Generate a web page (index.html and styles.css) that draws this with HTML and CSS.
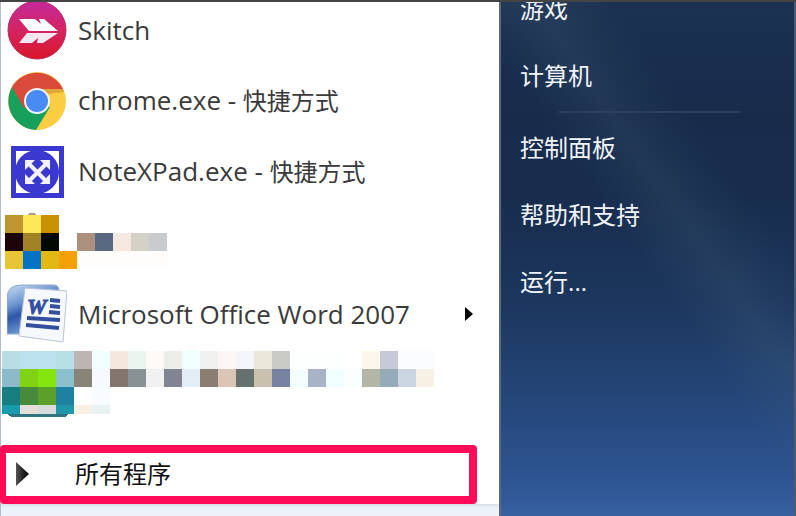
FILE: index.html
```
<!DOCTYPE html>
<html lang="zh-CN">
<head>
    <meta charset="UTF-8">
    <meta name="viewport" content="width=device-width, initial-scale=1.0">
    <title>开始菜单</title>
    <link rel="stylesheet" href="styles.css">
</head>
<body>
    <div class="start-menu">
        <div class="programs">
            <nav class="program-list">
                <a class="program" href="#">
                    <svg class="icon" viewBox="0 0 60 60" aria-hidden="true">
                        <defs>
                            <linearGradient id="skitchBg" x1="0" y1="0" x2="0" y2="1">
                                <stop offset="0" stop-color="#c42a9c"/>
                                <stop offset="0.5" stop-color="#d42463"/>
                                <stop offset="1" stop-color="#da1628"/>
                            </linearGradient>
                        </defs>
                        <circle cx="30" cy="30" r="29" fill="url(#skitchBg)" stroke="#b8285a" stroke-width="1"/>
                        <path d="M12 19h16l6 5-2-5h5l14 12H22z" fill="#fff"/>
                        <path d="M20 33h31L36 43h-6l1-5-6 5H12z" fill="#f6e8f0"/>
                    </svg>
                    <span>Skitch</span>
                </a>
                <a class="program" href="#">
                    <svg class="icon" viewBox="0 0 60 60" aria-hidden="true">
                        <circle cx="30" cy="30" r="29" fill="#fbcd43"/>
                        <path d="M30 30L5 16A29 29 0 0 0 29 59L43 36z" fill="#17a05c"/>
                        <path d="M30 30L17 37 5 16A29 29 0 0 1 56 18H30z" fill="#d94a3b"/>
                        <path d="M30 18h26l1 3-22 3z" fill="#e0a63a"/>
                        <circle cx="30" cy="30" r="13" fill="#f1f4f8"/>
                        <circle cx="30" cy="30" r="11" fill="#4a8af4"/>
                    </svg>
                    <span>chrome.exe - <span class="cjk">快捷方式</span></span>
                </a>
                <a class="program" href="#">
                    <svg class="icon" viewBox="0 0 60 60" aria-hidden="true">
                        <path d="M4 4h53v52H4z" fill="#3a38cf"/>
                        <path d="M9 9h43v42H9z" fill="#fff"/>
                        <circle cx="30" cy="30" r="22" fill="#3a38cf"/>
                        <path d="M22 22l17 17M39 22L22 39" stroke="#f2f2ff" stroke-width="4"/>
                        <path d="M18 18h10L18 28zM43 18v10L33 18zM18 42V32l10 10zM43 42H33l10-10z" fill="#f2f2ff"/>
                    </svg>
                    <span>NoteXPad.exe - <span class="cjk">快捷方式</span></span>
                </a>
                <a class="program masked" href="#" aria-label="已隐藏的程序">
                    <svg class="mosaic mosaic-small" viewBox="0 0 162 60" shape-rendering="crispEdges">
                        <path d="M22 2l3-2h4l3 2z" fill="#b39a86"/>
                        <path d="M0 2h18v18H0z" fill="#bd962f"/>
                        <path d="M18 2h18v18H18z" fill="#fde858"/>
                        <path d="M36 2h18v18H36z" fill="#c89100"/>
                        <path d="M0 20h18v18H0z" fill="#1d0407"/>
                        <path d="M18 20h18v18H18z" fill="#a18323"/>
                        <path d="M36 20h18v18H36z" fill="#020803"/>
                        <path d="M72 20h18v18H72z" fill="#ab917d"/>
                        <path d="M90 20h18v18H90z" fill="#5a6982"/>
                        <path d="M108 20h18v18h-18z" fill="#f5e8e1"/>
                        <path d="M126 20h18v18h-18z" fill="#d4d1c6"/>
                        <path d="M144 20h18v18h-18z" fill="#cacbcf"/>
                        <path d="M0 38h18v18H0z" fill="#e8c534"/>
                        <path d="M18 38h18v18H18z" fill="#0672c6"/>
                        <path d="M36 38h18v18H36z" fill="#e2b814"/>
                        <path d="M54 38h18v18H54z" fill="#f5a006"/>
                        <path d="M72 38h90v16H72z" fill="#fffdfc"/>
                    </svg>
                </a>
                <a class="program" href="#">
                    <svg class="icon" viewBox="0 0 60 60" aria-hidden="true">
                        <defs>
                            <linearGradient id="wordBg" x1="0" y1="0" x2="0.4" y2="1">
                                <stop offset="0" stop-color="#c9dcf2"/>
                                <stop offset="0.4" stop-color="#6b93cf"/>
                                <stop offset="0.6" stop-color="#2c56a8"/>
                                <stop offset="1" stop-color="#7ba5dc"/>
                            </linearGradient>
                        </defs>
                        <path d="M0 50V13Q1 1 14 1h33q5 0 5 6v43z" fill="url(#wordBg)" stroke="#8fa9cf"/>
                        <path d="M18 4l42 3-4 51-44-6z" fill="#f5f8fd" stroke="#b9c4d6"/>
                        <text class="word-mark" x="20" y="30">W</text>
                        <path d="M43 16l10 1M43 22l10 1M42 28l11 1M20 34l33 2M19 41l33 3" stroke="#334f9e" stroke-width="4"/>
                    </svg>
                    <span>Microsoft Office Word 2007</span>
                    <svg class="more" viewBox="0 0 8 14" aria-hidden="true"><path d="M0 0l8 7-8 7z" fill="#000"/></svg>
                </a>
                <a class="program masked" href="#" aria-label="已隐藏的程序">
                    <svg class="mosaic mosaic-large" viewBox="0 0 432 68" shape-rendering="crispEdges">
                        <path d="M5 63h62l-4 3H10z" fill="#2f7280"/>
                        <path d="M0 0h18v18H0z" fill="#b8dde5"/>
                        <path d="M18 0h36v18H18z" fill="#bbe1ee"/>
                        <path d="M54 0h18v18H54z" fill="#b7dfe6"/>
                        <path d="M72 0h18v18H72z" fill="#bdb4b3"/>
                        <path d="M90 0h18v18H90z" fill="#f2ffff"/>
                        <path d="M108 0h18v18h-18z" fill="#f5e6de"/>
                        <path d="M126 0h18v18h-18z" fill="#e8f4ed"/>
                        <path d="M144 0h18v18h-18z" fill="#fff9f6"/>
                        <path d="M162 0h18v18h-18z" fill="#ebeee9"/>
                        <path d="M180 0h18v18h-18z" fill="#efffff"/>
                        <path d="M198 0h18v18h-18z" fill="#eef1ee"/>
                        <path d="M216 0h18v18h-18z" fill="#fcf7f6"/>
                        <path d="M234 0h18v18h-18z" fill="#f4f5f9"/>
                        <path d="M252 0h18v18h-18z" fill="#e9e6da"/>
                        <path d="M270 0h18v18h-18z" fill="#cacbc6"/>
                        <path d="M288 0h54v18h-54z" fill="#fdfffe"/>
                        <path d="M360 0h18v18h-18z" fill="#fbf8e9"/>
                        <path d="M378 0h18v18h-18z" fill="#c7cad6"/>
                        <path d="M396 0h36v18h-36z" fill="#fbfcff"/>
                        <path d="M0 18h18v18H0z" fill="#8dbac9"/>
                        <path d="M18 18h18v18H18z" fill="#7fd313"/>
                        <path d="M36 18h18v18H36z" fill="#86e50e"/>
                        <path d="M54 18h18v18H54z" fill="#8bc0cd"/>
                        <path d="M72 18h18v18H72z" fill="#87857a"/>
                        <path d="M90 18h18v18H90z" fill="#f6faff"/>
                        <path d="M108 18h18v18h-18z" fill="#83766e"/>
                        <path d="M126 18h18v18h-18z" fill="#889193"/>
                        <path d="M144 18h18v18h-18z" fill="#f1f1f1"/>
                        <path d="M162 18h18v18h-18z" fill="#828493"/>
                        <path d="M180 18h18v18h-18z" fill="#e2edf6"/>
                        <path d="M198 18h18v18h-18z" fill="#8a7e72"/>
                        <path d="M216 18h18v18h-18z" fill="#dcc4b7"/>
                        <path d="M234 18h18v18h-18z" fill="#66716f"/>
                        <path d="M252 18h18v18h-18z" fill="#c9c1ad"/>
                        <path d="M270 18h18v18h-18z" fill="#7782a1"/>
                        <path d="M288 18h18v18h-18z" fill="#f3fcff"/>
                        <path d="M306 18h18v18h-18z" fill="#a8b4c5"/>
                        <path d="M324 18h18v18h-18z" fill="#f0ffff"/>
                        <path d="M342 18h18v18h-18z" fill="#f9ffff"/>
                        <path d="M360 18h18v18h-18z" fill="#b3b6a6"/>
                        <path d="M378 18h18v18h-18z" fill="#94acba"/>
                        <path d="M396 18h18v18h-18z" fill="#cbd6e2"/>
                        <path d="M414 18h18v18h-18z" fill="#f8f0e4"/>
                        <path d="M0 36h18v18H0z" fill="#177e80"/>
                        <path d="M18 36h18v18H18z" fill="#488a3b"/>
                        <path d="M36 36h18v18H36z" fill="#5ca02c"/>
                        <path d="M54 36h18v18H54z" fill="#1c82a0"/>
                        <path d="M90 36h18v18H90z" fill="#f8fbff"/>
                        <path d="M0 54h18v9H0z" fill="#179bac"/>
                        <path d="M18 54h18v9H18z" fill="#e5dfdb"/>
                        <path d="M36 54h18v9H36z" fill="#d8dddc"/>
                        <path d="M54 54h18v9H54z" fill="#2096a9"/>
                        <path d="M72 54h18v9H72z" fill="#f7f0e3"/>
                        <path d="M90 54h18v9H90z" fill="#e9f1f1"/>
                    </svg>
                </a>
            </nav>
            <a class="all-programs" href="#">
                <svg class="all-arrow" viewBox="0 0 13 24" aria-hidden="true">
                    <defs>
                        <linearGradient id="arrowFill" x1="0" y1="0" x2="1" y2="0">
                            <stop offset="0" stop-color="#555"/>
                            <stop offset="0.6" stop-color="#1c1c1c"/>
                            <stop offset="1" stop-color="#000"/>
                        </linearGradient>
                    </defs>
                    <path d="M0 0l13 12L0 24z" fill="url(#arrowFill)"/>
                </svg>
                <span class="cjk">所有程序</span>
            </a>
            <div class="search-strip"></div>
        </div>
        <nav class="places">
            <a class="place" href="#">游戏</a>
            <a class="place" href="#">计算机</a>
            <hr class="divider">
            <a class="place" href="#">控制面板</a>
            <a class="place" href="#">帮助和支持</a>
            <a class="place" href="#">运行...</a>
        </nav>
    </div>
</body>
</html>
```
FILE: styles.css
```
* {
    box-sizing: border-box;
}
body {
    margin: 0;
    font-family: "Open Sans", "Noto Sans CJK SC", sans-serif;
    font-size: 24px;
    color: #3a3a3a;
    background-color: #fff;
}
a {
    color: inherit;
    text-decoration: none;
}
svg {
    display: block;
    flex: none;
}
.start-menu {
    display: grid;
    grid-template-columns: 627fr 373fr;
    min-height: 100vh;
    border-top: 2px solid #444;
    overflow: hidden;
}

/* left column */
.programs {
    display: flex;
    flex-direction: column;
    border-left: 1px solid #b4bccb;
}
.program-list {
    margin-top: -8px;
}
.program {
    display: flex;
    align-items: center;
    gap: 11px;
    height: 71px;
    padding: 0 26px 0 6px;
    font-size: 26px;
    line-height: 32px;
    white-space: nowrap;
}
.cjk {
    font-size: 24px;
}
.icon {
    width: 60px;
    height: 60px;
}
.word-mark {
    font: italic bold 22px "Liberation Serif", serif;
    fill: #334f9e;
    stroke: #334f9e;
}
.more {
    width: 8px;
    height: 14px;
    margin-left: auto;
}
.masked {
    padding-left: 1px;
}
.mosaic-small {
    width: 162px;
    height: 60px;
    margin-left: 3px;
}
.mosaic-large {
    width: 432px;
    height: 68px;
}
.all-programs {
    display: flex;
    align-items: center;
    gap: 46px;
    height: 59px;
    margin: 25px 22px 0 -1px;
    padding: 0 0 2px 10px;
    border: 8px solid #ff0b57;
    border-left-width: 6px;
    border-radius: 4px;
    color: #111;
    line-height: 32px;
}
.all-arrow {
    width: 13px;
    height: 24px;
}
.search-strip {
    flex: 1;
    min-height: 12px;
    background: linear-gradient(#d9dfe9, #edf2fa 4px);
}

/* right column */
.places {
    border-left: 2px solid #5b6878;
    border-right: 2px solid #4b5a70;
    color: #f0f4fa;
    background:
        linear-gradient(55deg, transparent 49%, rgba(80, 110, 130, 0.18) 60%, rgba(80, 110, 130, 0.08) 66%, transparent 72%),
        linear-gradient(#1c3252, #172b4b 22%, #182d4e 38%, #1c365d 58%, #25477a 78%, #2d5391 92%, #3660a0);
}
.place {
    display: flex;
    align-items: center;
    height: 67px;
    padding-left: 19px;
    line-height: 32px;
}
.place:first-child {
    margin-top: -27px;
}
.divider {
    height: 2px;
    margin: 2px 54px 1px 58px;
    border: none;
    background-color: #2b405e;
}
```
